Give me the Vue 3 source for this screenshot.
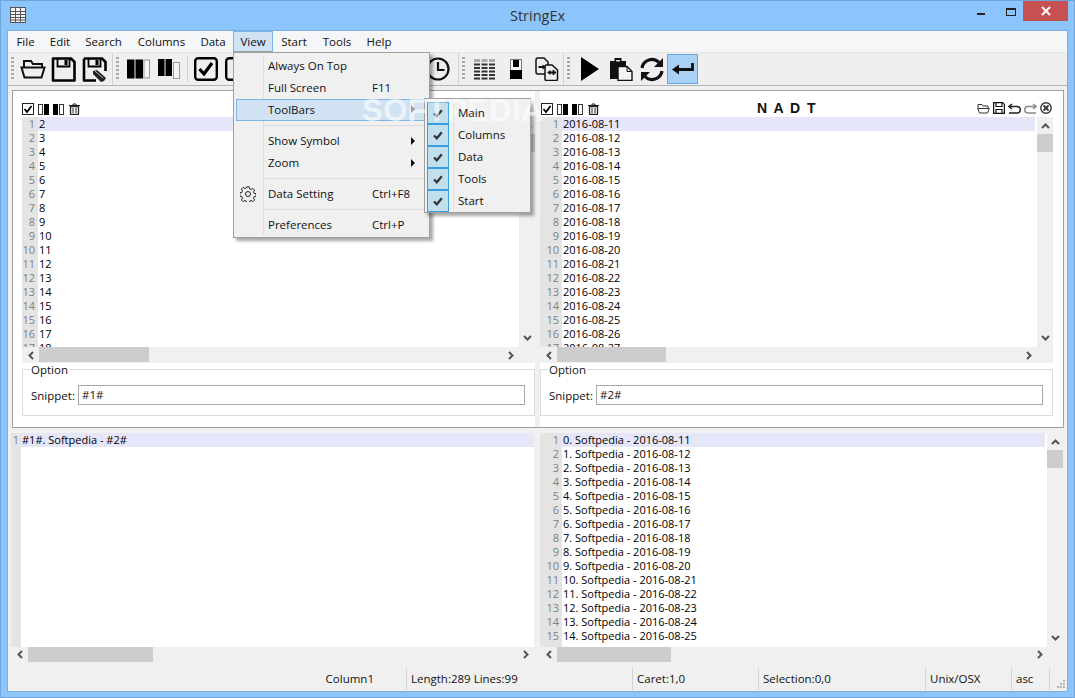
<template>
  <div class="window">
    <!-- Title bar -->
    <div class="titlebar">
      <svg class="app-icon" width="16" height="16" viewBox="0 0 16 16">
        <rect x="0.5" y="0.5" width="15" height="15" fill="#f4f4f4" stroke="#555" />
        <path d="M0 4.5h16M0 7.5h16M0 10.5h16M0 13h16M5.5 0v16M10.5 0v16" stroke="#555" fill="none" />
      </svg>
      <span class="title">StringEx</span>
      <div class="win-controls">
        <span class="win-min"></span>
        <span class="win-max"></span>
        <span class="win-close">
          <svg width="10" height="10" viewBox="0 0 10 10"><path d="M1 1l8 8M9 1l-8 8" stroke="#fff" stroke-width="2" /></svg>
        </span>
      </div>
    </div>

    <div class="client">
      <!-- Menu bar -->
      <div class="menubar">
        <span v-for="m in menus" :key="m" class="menu-item" :class="['m-' + m.toLowerCase(), { open: m === 'View' }]">{{ m }}</span>
      </div>

      <!-- Toolbars -->
      <div class="toolbar">
        <div class="tb-group tb-main">
          <span class="grip"></span>
          <span class="tb-btn">
            <svg width="26" height="22" viewBox="0 0 26 22" fill="none" stroke="#111" stroke-width="2"><path d="M4 9V3h7l2 3h9v3" /><path d="M1.5 9.5h23l-3 10H4.5z" /></svg>
          </span>
          <span class="tb-btn">
            <svg width="25" height="25" viewBox="0 0 25 25"><path d="M2 1.500h18l3.500 3.500V23.500H2z" fill="none" stroke="#000" stroke-width="2.600" stroke-linejoin="round" /><path d="M6.500 2v7.500h12V2" fill="none" stroke="#000" stroke-width="1.800" /><rect x="13.500" y="3" width="3" height="5" fill="#000" /></svg>
          </span>
          <span class="tb-btn">
            <svg width="25" height="25" viewBox="0 0 25 25"><path d="M2 1.500h18l3.500 3.500V14M14 23.500H2v-22" fill="none" stroke="#000" stroke-width="2.600" stroke-linejoin="round" /><path d="M6.500 2v7.500h12V2" fill="none" stroke="#000" stroke-width="1.800" /><rect x="13.500" y="3" width="3" height="5" fill="#000" /><path d="M11 14l4-1 9 8-2 3-3 1-8-8z" fill="#222" /><path d="M13 14l8 7" stroke="#bbb" /></svg>
          </span>
        </div>

        <div class="tb-group tb-columns">
          <span class="grip"></span>
          <span class="tb-btn">
            <svg width="23" height="20" viewBox="0 0 23 20"><rect width="7.500" height="19" y="0.500" fill="#000" /><rect x="8.500" width="7.500" height="19" y="0.500" fill="#000" /><rect x="17" y="1" width="5.500" height="18" fill="#f4f4f4" stroke="#999" /></svg>
          </span>
          <span class="tb-btn">
            <svg width="23" height="20" viewBox="0 0 23 20"><rect width="6.500" height="17" fill="#000" /><rect x="7.500" width="6.500" height="17" fill="#000" /><rect x="15.500" y="3.500" width="6" height="16" fill="#f4f4f4" stroke="#999" /></svg>
          </span>
          <span class="tb-sep"></span>
          <span class="tb-btn">
            <svg width="24" height="24" viewBox="0 0 24 24" fill="none" stroke="#000"><rect x="1.200" y="1.200" width="21.600" height="21.600" rx="3" stroke-width="2.400" /><path d="M5.500 12l4.500 5 8-11" stroke-width="3.200" /></svg>
          </span>
          <span class="tb-btn">
            <svg width="24" height="24" viewBox="0 0 24 24" fill="none" stroke="#000"><rect x="1.200" y="1.200" width="21.600" height="21.600" rx="3" stroke-width="2.400" /></svg>
          </span>
          <span class="tb-fill"></span>
          <span class="tb-btn">
            <svg width="24" height="24" viewBox="0 0 24 24" fill="none" stroke="#111" stroke-width="2.200"><circle cx="12" cy="12" r="10.500" /><path d="M12 5v8h6.500" /></svg>
          </span>
        </div>

        <div class="tb-group tb-data">
          <span class="grip"></span>
          <span class="tb-btn">
            <svg width="22" height="21" viewBox="0 0 22 21" fill="none" stroke-dasharray="6 1.500"><path d="M0 1.500h22" stroke="#aaa" stroke-width="3" /><path d="M0 5.500h22M0 9h22M0 12.500h22M0 16h22M0 19.500h22" stroke="#333" stroke-width="2.200" /></svg>
          </span>
          <span class="tb-btn">
            <svg width="12" height="20" viewBox="0 0 12 20"><rect x="0.500" y="0.500" width="11" height="19" fill="#f4f4f4" stroke="#777" /><rect x="3" y="1" width="6" height="7" fill="#000" /><rect y="11" width="12" height="9" fill="#000" /></svg>
          </span>
          <span class="tb-btn">
            <svg width="24" height="24" viewBox="0 0 24 24" fill="none" stroke="#111" stroke-width="1.500"><path d="M10 17H3a2 2 0 0 1-2-2V3a2 2 0 0 1 2-2h6l4 4v3" /><path d="M11.500 8H17l5.500 5v9a1.500 1.500 0 0 1-1.500 1.500h-9.500A1.500 1.500 0 0 1 10 22V9.500A1.500 1.500 0 0 1 11.500 8z" fill="#f0f0f0" /><path d="M3.500 10H8M15 15.500h6M18.500 13v5" stroke-width="1.800" /><path d="M7.500 7.500l3.500 2.500-3.500 2.500zM15.500 13l-3.500 2.500 3.500 2.500z" fill="#111" stroke="none" /></svg>
          </span>
        </div>

        <div class="tb-group tb-start">
          <span class="grip"></span>
          <span class="tb-btn">
            <svg width="18" height="24" viewBox="0 0 18 24"><path d="M0 0l18 12L0 24z" fill="#000" /></svg>
          </span>
          <span class="tb-btn">
            <svg width="24" height="24" viewBox="0 0 24 24"><path d="M1 4h4.500V1h7v3H17v18H1z" fill="#111" /><path d="M7 3h4v1.500H7z" fill="#ddd" /><path d="M9 9.500h9l5 5v9H9z" fill="#f4f4f4" stroke="#111" stroke-width="1.400" /><path d="M18 9.500v5h5" fill="none" stroke="#111" /></svg>
          </span>
          <span class="tb-btn">
            <svg width="26" height="25" viewBox="0 0 26 25" fill="none" stroke="#111" stroke-width="3.200"><path d="M3 11A10 10 0 0 1 20 5.500" /><path d="M23 14A10 10 0 0 1 6 19.500" /><path d="M24 1v9h-9z" fill="#111" stroke="none" /><path d="M2 24v-9h9z" fill="#111" stroke="none" /></svg>
          </span>
          <span class="tb-btn active">
            <svg width="22" height="12" viewBox="0 0 22 12"><path d="M20.500 0v6.500H6" fill="none" stroke="#111" stroke-width="2.800" /><path d="M0 6.500L7 1.500v10z" fill="#111" /></svg>
          </span>
        </div>
      </div>

      <!-- Column panes -->
      <div class="frame">
        <div class="pane pane-left">
          <div class="pane-head">
            <svg width="12" height="12" viewBox="0 0 12 12" fill="none" stroke="#222"><rect x="0.500" y="0.500" width="11" height="11" /><path d="M2.500 6l2.500 3 4.500-6" stroke="#000" stroke-width="1.800" /></svg>
            <svg class="mini" width="11" height="11" viewBox="0 0 11 11"><rect x="0.500" y="0.500" width="4" height="10" fill="#fff" stroke="#333" /><rect x="6" width="5" height="11" fill="#000" /></svg>
            <svg class="mini" width="11" height="11" viewBox="0 0 11 11"><rect width="5" height="11" fill="#000" /><rect x="6.500" y="0.500" width="4" height="10" fill="#fff" stroke="#333" /></svg>
            <svg class="mini trash" width="11" height="12" viewBox="0 0 11 12" fill="none" stroke="#222"><path d="M0 2.500h11M4 2.500V1h3v1.500" /><path d="M1.500 3.500h8V11a.5.5 0 0 1-.5.5H2a.5.5 0 0 1-.5-.5z" stroke-width="1.300" /><path d="M4 5v5M7 5v5" /></svg>
          </div>
          <div class="editor ed-top">
            <div class="gutter g-16"><span v-for="n in 17" :key="n">{{ n }}</span></div>
            <div class="lines">
              <div v-for="(l, i) in leftLines" :key="i" class="line" :class="{ current: i === 0 }">{{ l }}</div>
            </div>
            <div class="vscroll">
              <svg class="arrow" width="9" height="6" viewBox="0 0 9 6"><path d="M1 5l3.500-3.500L8 5" fill="none" stroke="#555" stroke-width="2" /></svg>
              <span class="vthumb"></span>
              <svg class="arrow arrow-end" width="9" height="6" viewBox="0 0 9 6"><path d="M1 1l3.500 3.500L8 1" fill="none" stroke="#555" stroke-width="2" /></svg>
            </div>
          </div>
          <div class="hscroll hs-top">
            <svg class="arrow" width="6" height="9" viewBox="0 0 6 9"><path d="M5 1L1.500 4.500 5 8" fill="none" stroke="#555" stroke-width="2" /></svg>
            <span class="hthumb t-110"></span>
            <svg class="arrow arrow-end" width="6" height="9" viewBox="0 0 6 9"><path d="M1 1l3.500 3.500L1 8" fill="none" stroke="#555" stroke-width="2" /></svg>
          </div>
          <fieldset class="option">
            <legend>Option</legend>
            <label>Snippet:</label>
            <span class="snippet">#1#</span>
          </fieldset>
        </div>

        <div class="splitter"></div>

        <div class="pane pane-right">
          <div class="pane-head">
            <svg width="12" height="12" viewBox="0 0 12 12" fill="none" stroke="#222"><rect x="0.500" y="0.500" width="11" height="11" /><path d="M2.500 6l2.500 3 4.500-6" stroke="#000" stroke-width="1.800" /></svg>
            <svg class="mini" width="11" height="11" viewBox="0 0 11 11"><rect x="0.500" y="0.500" width="4" height="10" fill="#fff" stroke="#333" /><rect x="6" width="5" height="11" fill="#000" /></svg>
            <svg class="mini" width="11" height="11" viewBox="0 0 11 11"><rect width="5" height="11" fill="#000" /><rect x="6.500" y="0.500" width="4" height="10" fill="#fff" stroke="#333" /></svg>
            <svg class="mini trash" width="11" height="12" viewBox="0 0 11 12" fill="none" stroke="#222"><path d="M0 2.500h11M4 2.500V1h3v1.500" /><path d="M1.500 3.500h8V11a.5.5 0 0 1-.5.5H2a.5.5 0 0 1-.5-.5z" stroke-width="1.300" /><path d="M4 5v5M7 5v5" /></svg>
            <span class="col-title">N A D T</span>
            <div class="head-tools">
              <svg width="13" height="11" viewBox="0 0 13 11" fill="none" stroke="#333"><path d="M1 5V1.500h4l1 1.500h5v2" /><path d="M.7 5.500h11.600L10.500 10h-8z" /></svg>
              <svg width="12" height="12" viewBox="0 0 12 12" fill="none" stroke="#111" stroke-width="1.200"><path d="M.6.600h9l1.800 1.800v9H.6z" /><path d="M3 1v3.500h6V1M3 11V7.500h6V11" /></svg>
              <svg width="13" height="11" viewBox="0 0 13 11" fill="none" stroke="#222" stroke-width="1.500"><path d="M4 1L1 3.500 4 6" /><path d="M1.500 3.500H9a3 3 0 0 1 0 6.500H1" /></svg>
              <svg width="13" height="11" viewBox="0 0 13 11" fill="none" stroke="#888" stroke-width="1.500"><path d="M9 1l3 2.500L9 6" /><path d="M11.500 3.500H4a3 3 0 0 0 0 6.500h8" /></svg>
              <svg width="12" height="12" viewBox="0 0 12 12" fill="none" stroke="#333"><circle cx="6" cy="6" r="5.200" stroke-width="1.400" /><path d="M3.500 3.500l5 5M8.500 3.500l-5 5" stroke-width="1.800" /></svg>
            </div>
          </div>
          <div class="editor ed-top">
            <div class="gutter g-22"><span v-for="n in 17" :key="n">{{ n }}</span></div>
            <div class="lines">
              <div v-for="(l, i) in rightLines" :key="i" class="line" :class="{ current: i === 0 }">{{ l }}</div>
            </div>
            <div class="vscroll">
              <svg class="arrow" width="9" height="6" viewBox="0 0 9 6"><path d="M1 5l3.500-3.500L8 5" fill="none" stroke="#555" stroke-width="2" /></svg>
              <span class="vthumb"></span>
              <svg class="arrow arrow-end" width="9" height="6" viewBox="0 0 9 6"><path d="M1 1l3.500 3.500L8 1" fill="none" stroke="#555" stroke-width="2" /></svg>
            </div>
          </div>
          <div class="hscroll hs-top">
            <svg class="arrow" width="6" height="9" viewBox="0 0 6 9"><path d="M5 1L1.500 4.500 5 8" fill="none" stroke="#555" stroke-width="2" /></svg>
            <span class="hthumb t-109"></span>
            <svg class="arrow arrow-end" width="6" height="9" viewBox="0 0 6 9"><path d="M1 1l3.500 3.500L1 8" fill="none" stroke="#555" stroke-width="2" /></svg>
          </div>
          <fieldset class="option">
            <legend>Option</legend>
            <label>Snippet:</label>
            <span class="snippet">#2#</span>
          </fieldset>
        </div>
      </div>

      <!-- Output panes -->
      <div class="output">
        <div class="out-pane out-left">
          <div class="editor ed-bottom">
            <div class="gutter g-10"><span>1</span></div>
            <div class="lines">
              <div class="line current">#1#. Softpedia - #2#</div>
            </div>
          </div>
          <div class="hscroll">
            <svg class="arrow" width="6" height="9" viewBox="0 0 6 9"><path d="M5 1L1.500 4.500 5 8" fill="none" stroke="#555" stroke-width="2" /></svg>
            <span class="hthumb t-125"></span>
            <svg class="arrow arrow-end" width="6" height="9" viewBox="0 0 6 9"><path d="M1 1l3.500 3.500L1 8" fill="none" stroke="#555" stroke-width="2" /></svg>
          </div>
        </div>
        <div class="out-pane out-right">
          <div class="editor ed-bottom">
            <div class="gutter g-22"><span v-for="n in 15" :key="n">{{ n }}</span></div>
            <div class="lines">
              <div v-for="(l, i) in outputLines" :key="i" class="line" :class="{ current: i === 0 }">{{ l }}</div>
            </div>
            <div class="vscroll">
              <svg class="arrow" width="9" height="6" viewBox="0 0 9 6"><path d="M1 5l3.500-3.500L8 5" fill="none" stroke="#555" stroke-width="2" /></svg>
              <span class="vthumb"></span>
              <svg class="arrow arrow-end" width="9" height="6" viewBox="0 0 9 6"><path d="M1 1l3.500 3.500L8 1" fill="none" stroke="#555" stroke-width="2" /></svg>
            </div>
          </div>
          <div class="hscroll hs-out">
            <svg class="arrow" width="6" height="9" viewBox="0 0 6 9"><path d="M5 1L1.500 4.500 5 8" fill="none" stroke="#555" stroke-width="2" /></svg>
            <span class="hthumb t-114"></span>
            <svg class="arrow arrow-end" width="6" height="9" viewBox="0 0 6 9"><path d="M1 1l3.500 3.500L1 8" fill="none" stroke="#555" stroke-width="2" /></svg>
          </div>
        </div>
      </div>

      <!-- Status bar -->
      <div class="statusbar">
        <span class="st st-name">Column1</span>
        <span class="st">Length:289 Lines:99</span>
        <span class="st">Caret:1,0</span>
        <span class="st">Selection:0,0</span>
        <span class="st">Unix/OSX</span>
        <span class="st">asc</span>
        <span class="st st-grip">
          <svg width="8" height="8" viewBox="0 0 8 8" fill="#b5b5b5"><rect x="6" y="0" width="2" height="2" /><rect x="3" y="3" width="2" height="2" /><rect x="6" y="3" width="2" height="2" /><rect x="0" y="6" width="2" height="2" /><rect x="3" y="6" width="2" height="2" /><rect x="6" y="6" width="2" height="2" /></svg>
        </span>
      </div>
    </div>

    <!-- Open View menu -->
    <div class="dropdown">
      <div class="dd-item"><span class="dd-label">Always On Top</span></div>
      <div class="dd-item"><span class="dd-label">Full Screen</span><span class="dd-key">F11</span></div>
      <div class="dd-item hot"><span class="dd-label">ToolBars</span><i class="caret"></i></div>
      <div class="dd-sep"></div>
      <div class="dd-item"><span class="dd-label">Show Symbol</span><i class="caret"></i></div>
      <div class="dd-item"><span class="dd-label">Zoom</span><i class="caret"></i></div>
      <div class="dd-sep"></div>
      <div class="dd-item">
        <svg class="gear" width="16" height="16" viewBox="0 0 16 16" fill="none" stroke="#222"><path d="M6.800.8h2.400l.4 2 1.500.7 1.800-1.100 1.700 1.700-1.100 1.800.7 1.500 2 .4v2.400l-2 .4-.7 1.500 1.100 1.800-1.700 1.700-1.800-1.100-1.500.7-.4 2H6.800l-.4-2-1.500-.7-1.800 1.100-1.700-1.700 1.100-1.800-.7-1.500-2-.4V6.800l2-.4.7-1.500-1.100-1.800 1.700-1.700 1.800 1.100 1.500-.7z" /><circle cx="8" cy="8" r="2.500" /></svg>
        <span class="dd-label">Data Setting</span><span class="dd-key">Ctrl+F8</span>
      </div>
      <div class="dd-sep"></div>
      <div class="dd-item"><span class="dd-label">Preferences</span><span class="dd-key">Ctrl+P</span></div>
    </div>

    <div class="submenu">
      <div v-for="t in toolbars" :key="t" class="sub-item">
        <span class="sub-check">
          <svg width="10" height="9" viewBox="0 0 10 9"><path d="M1 4.500l2.800 2.800 5-6" fill="none" stroke="#333" stroke-width="2.200" /></svg>
        </span>
        <span class="sub-label">{{ t }}</span>
      </div>
    </div>

    <span class="watermark">SOFTPEDIA</span>
  </div>
</template>

<script setup>
const menus = ['File', 'Edit', 'Search', 'Columns', 'Data', 'View', 'Start', 'Tools', 'Help']
const toolbars = ['Main', 'Columns', 'Data', 'Tools', 'Start']

const leftLines = Array.from({ length: 17 }, (_, i) => String(i + 2))
const rightLines = Array.from({ length: 17 }, (_, i) => `2016-08-${i + 11}`)
const outputLines = Array.from({ length: 15 }, (_, i) => `${i}. Softpedia - 2016-08-${i + 11}`)
</script>

<style scoped>
.window {
  position: relative;
  width: 1075px;
  height: 698px;
  box-sizing: border-box;
  overflow: hidden;
  background: #8bc5fb;
  border: 1px solid #6fa5d8;
  font-family: "Open Sans", "Noto Sans", sans-serif;
  font-size: 11.5px;
  color: #111;
}

/* Title bar */
.titlebar {
  height: 29px;
  position: relative;
  display: flex;
  align-items: center;
  justify-content: center;
}

.app-icon {
  position: absolute;
  left: 9px;
  top: 6px;
}

.title {
  font-size: 14.5px;
  color: #333;
  margin-top: -1px;
}

.win-controls {
  position: absolute;
  top: 0;
  right: 6px;
  display: flex;
}

.win-min {
  position: absolute;
  right: 83px;
  top: 12px;
  width: 8px;
  height: 2px;
  background: #222;
}

.win-max {
  position: absolute;
  right: 52px;
  top: 7px;
  width: 8px;
  height: 5px;
  border: 1px solid #222;
  border-top-width: 2px;
}

.win-close {
  width: 45px;
  height: 20px;
  background: #c75050;
  display: flex;
  align-items: center;
  justify-content: center;
}

/* Client */
.client {
  margin: 0 6px;
  height: 662px;
  box-sizing: border-box;
  background: #f0f0f0;
  border: 1px solid #7fb0dc;
  display: flex;
  flex-direction: column;
}

.menubar {
  height: 21px;
  background: #f5f6f7;
  display: flex;
  flex: none;
}

.menu-item {
  line-height: 21px;
  text-align: center;
  box-sizing: border-box;
}

.m-file { width: 35px; }
.m-edit { width: 34px; }
.m-search { width: 53px; }
.m-columns { width: 63px; }
.m-data { width: 40px; }
.m-view { width: 40px; }
.m-start { width: 42px; }
.m-tools { width: 44px; }
.m-help { width: 40px; }

.menu-item.open {
  background: #d1e2f2;
  border: 1px solid #7eb4ea;
  border-bottom-color: #a0a0a0;
  line-height: 19px;
}

.toolbar {
  flex: none;
  display: flex;
  background: #efefef;
  border-top: 1px solid #e6e6e6;
  border-bottom: 1px solid #b4b4b4;
  box-sizing: border-box;
  height: 34px;
}

.tb-group {
  position: relative;
  display: flex;
  align-items: center;
  height: 32px;
  box-sizing: border-box;
  border-right: 1px solid #d0d0d0;
}

.tb-main { width: 105px; padding-left: 9px; }
.tb-columns { width: 346px; padding-left: 9.5px; }
.tb-data { width: 105px; padding-left: 10px; }
.tb-start { width: 136px; padding-left: 10px; border-right: none; }

.grip {
  position: absolute;
  left: 3px;
  top: 4px;
  width: 3px;
  height: 24px;
  background: repeating-linear-gradient(to bottom, #a8a8a8 0 2px, transparent 2px 4px);
}

.tb-btn {
  flex: none;
  width: 31px;
  height: 30px;
  box-sizing: border-box;
  display: flex;
  align-items: center;
  justify-content: center;
}

.tb-btn.active {
  background: #a8d1f5;
  border: 1px solid #66a7e8;
}

.tb-sep {
  width: 1px;
  height: 26px;
  background: #cfcfcf;
  margin: 0 3px 0 2px;
}

.tb-fill {
  flex: 1;
}

.tb-columns .tb-btn:last-child {
  margin-right: 5px;
}

/* Panes */
.frame {
  flex: none;
  height: 338px;
  margin: 4px 3px 0 4px;
  box-sizing: border-box;
  border: 1px solid #a0a0a0;
  background: #fff;
  display: flex;
}

.pane {
  width: 522px;
  box-sizing: border-box;
  display: flex;
  flex-direction: column;
}

.pane-left {
  padding-left: 9px;
}

.pane-right {
  padding-right: 9px;
}

.splitter {
  width: 5px;
  background: #f0f0f0;
}

.pane-head {
  height: 26px;
  display: flex;
  align-items: flex-end;
  padding-bottom: 2px;
  box-sizing: border-box;
  position: relative;
  flex: none;
}

.pane-right .pane-head {
  padding-left: 1px;
}

.mini {
  margin-left: 4px;
}

.mini.trash {
  margin-left: 5px;
}

.col-title {
  position: absolute;
  left: 217px;
  bottom: 1px;
  font-weight: 700;
  font-size: 14px;
  line-height: 16px;
  letter-spacing: 1.5px;
  font-family: "Liberation Sans", sans-serif;
}

.head-tools {
  position: absolute;
  right: 1px;
  bottom: 3px;
  display: flex;
  align-items: center;
  gap: 3px;
}

.editor {
  display: flex;
  background: #fff;
  overflow: hidden;
  flex: none;
  font-size: 11px;
}

.ed-top {
  height: 230px;
}

.ed-bottom {
  height: 214px;
}

.gutter {
  flex: none;
  background: #e4e4e4;
  color: #808080;
  display: flex;
  flex-direction: column;
  text-align: right;
  box-sizing: border-box;
  padding-right: 3px;
}

.gutter span {
  height: 14px;
  line-height: 14px;
  flex: none;
}

.g-10 { width: 10px; padding-right: 2px; }
.g-16 { width: 16px; }
.g-22 { width: 22px; }

.lines {
  flex: 1;
  min-width: 0;
  margin-right: 2px;
}

.out-left .lines {
  margin-right: 0;
}

.line {
  height: 14px;
  line-height: 14px;
  padding-left: 1px;
  white-space: nowrap;
  color: #000;
}

.line.current {
  background: #e6e6fa;
}

.vscroll,
.hscroll {
  background: #f0f0f0;
  display: flex;
  align-items: center;
  flex: none;
}

.vscroll {
  width: 16px;
  flex-direction: column;
}

.vscroll .arrow {
  margin: 6px 0 0;
  flex: none;
}

.vscroll .arrow-end {
  margin: auto 0 6px;
}

.vthumb {
  width: 16px;
  height: 18px;
  margin-top: 5px;
  background: #cdcdcd;
}

.hscroll {
  height: 15px;
}

.hs-top {
  height: 16px;
  padding-right: 16px;
}

.hs-out {
  padding-right: 15px;
}

.hscroll .arrow {
  margin-left: 6px;
  margin-right: 5px;
  flex: none;
}

.hscroll .arrow-end {
  margin-left: auto;
}

.hthumb {
  height: 15px;
  background: #cdcdcd;
  align-self: flex-start;
}

.t-109 { width: 109px; }
.t-110 { width: 110px; }
.t-114 { width: 114px; }
.t-125 { width: 125px; }

.option {
  margin: 0;
  padding: 7px 9px 0 8px;
  height: 53px;
  box-sizing: border-box;
  border: 1px solid #dcdcdc;
  display: flex;
  align-items: center;
  min-width: 0;
}

.option legend {
  padding: 0 1px;
  margin-left: -1px;
  line-height: 13px;
}

.option label {
  width: 47px;
  flex: none;
  margin-top: 3px;
}

.snippet {
  flex: 1;
  height: 20px;
  line-height: 18px;
  box-sizing: border-box;
  border: 1px solid #a9a9a9;
  padding-left: 3px;
  margin-top: 2px;
  background: #fff;
}

/* Output */
.output {
  flex: none;
  display: flex;
  padding: 5px 3px 0 3px;
  height: 234px;
  box-sizing: border-box;
}

.out-left {
  width: 523px;
}

.out-right {
  width: 523px;
  margin-left: 6px;
}

/* Status bar */
.statusbar {
  flex: none;
  height: 22px;
  margin-top: 6px;
  display: grid;
  grid-template-columns: 398px 226px 126px 167px 86px 38px 1fr;
}

.st {
  line-height: 21px;
  padding-left: 4px;
  border-left: 1px solid #d4d4d4;
  position: relative;
  white-space: nowrap;
}

.st-name {
  border-left: none;
  text-align: right;
  padding-right: 32px;
}

.st-grip svg {
  position: absolute;
  right: 2px;
  bottom: 2px;
}

/* Menus */
.dropdown {
  position: absolute;
  left: 232px;
  top: 51px;
  width: 197px;
  height: 186px;
  box-sizing: border-box;
  background: #f0f0f0;
  border: 1px solid #a0a0a0;
  box-shadow: 3px 3px 3px rgba(0, 0, 0, 0.35);
  padding-top: 2px;
}

.dropdown::before {
  content: "";
  position: absolute;
  left: 29px;
  top: 2px;
  bottom: 2px;
  width: 1px;
  background: #dcdcdc;
}

.dd-item {
  position: relative;
  height: 22px;
  line-height: 22px;
  margin: 0 0 0 2px;
  box-sizing: border-box;
}

.dd-item.hot {
  background: #d1e2f2;
  border: 1px solid #7eb4ea;
  line-height: 20px;
}

.dd-label {
  position: absolute;
  left: 32px;
}

.hot .dd-label {
  left: 31px;
}

.dd-key {
  position: absolute;
  left: 136px;
}

.caret {
  position: absolute;
  left: 175px;
  top: 7px;
  border-left: 4px solid #111;
  border-top: 4px solid transparent;
  border-bottom: 4px solid transparent;
}

.hot .caret {
  left: 174px;
  top: 5px;
}

.gear {
  position: absolute;
  left: 4px;
  top: 3px;
}

.dd-sep {
  height: 1px;
  background: #dcdcdc;
  margin: 4px 1px 4px 30px;
}

.submenu {
  position: absolute;
  left: 423px;
  top: 97px;
  width: 107px;
  height: 115px;
  box-sizing: border-box;
  background: #f0f0f0;
  border: 1px solid #a0a0a0;
  box-shadow: 3px 3px 3px rgba(0, 0, 0, 0.35);
  padding: 3px 0 0 2px;
}

.submenu::before {
  content: "";
  position: absolute;
  left: 28px;
  top: 2px;
  bottom: 2px;
  width: 1px;
  background: #dcdcdc;
}

.sub-item {
  height: 22px;
  line-height: 22px;
  display: flex;
  align-items: center;
  gap: 9px;
}

.sub-label {
  position: relative;
  z-index: 2;
}

.sub-check {
  width: 22px;
  height: 22px;
  box-sizing: border-box;
  border: 1px solid #3b9cdc;
  background: #c2dfed;
  display: flex;
  align-items: center;
  justify-content: center;
}

.watermark {
  position: absolute;
  left: 361px;
  top: 92px;
  font-family: "Liberation Sans", sans-serif;
  font-weight: 700;
  font-size: 31px;
  letter-spacing: 0.5px;
  color: rgba(255, 255, 255, 0.6);
  pointer-events: none;
}
</style>

<style>
html,
body {
  margin: 0;
  background: #8bc5fb;
}
</style>
